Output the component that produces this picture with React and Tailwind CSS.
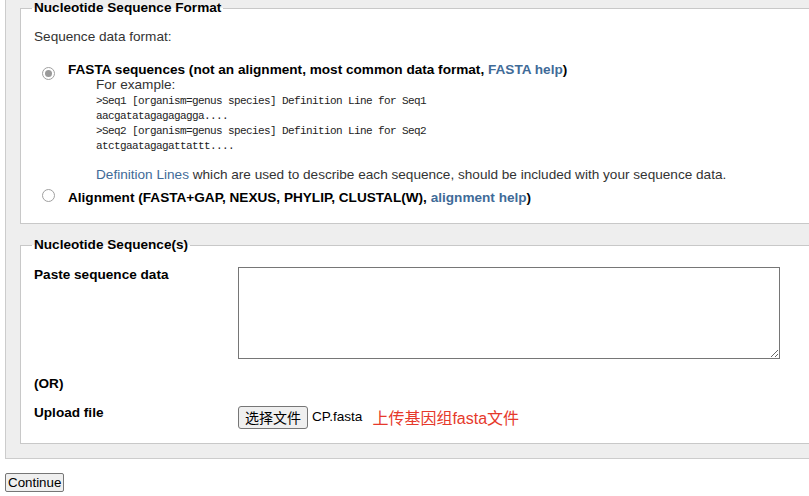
import React from 'react';

const SANS = { fontFamily: '"Liberation Sans", Arial, "Noto Sans CJK SC", sans-serif' };

function Radio({ checked }) {
  return (
    <span className="inline-flex w-[13px] h-[13px] shrink-0 rounded-full border border-[#a0a0a0] bg-white items-center justify-center">
      {checked && <span className="w-[7px] h-[7px] rounded-full bg-[#9a9a9a]" />}
    </span>
  );
}

export default function App() {
  return (
    <div className="w-[809px] h-[496px] overflow-hidden bg-white text-[13.6px] text-[#222]" style={SANS}>
      {/* Outer grey form box */}
      <div className="ml-[5px] w-[900px] bg-[#eeeeee] border-l border-b border-[#cccccc] pl-[14px] pb-[14px]">
        {/* Format */}
        <fieldset className="border border-[#c8c8c8] bg-white px-[13px] pb-[17px]">
          <legend className="font-bold leading-4 text-black -ml-0.5 px-0.5">Nucleotide Sequence Format</legend>
          <div className="mt-[13px] leading-4 text-[#333]">Sequence data format:</div>

          <div className="mt-[17px] flex items-start">
            <span className="ml-[8px] mt-[1px] mr-[13px]"><Radio checked /></span>
            <div className="leading-[15px]">
              <div className="font-bold text-black">
                FASTA sequences (not an alignment, most common data format,{' '}
                <a className="text-[#3f6b98]">FASTA help</a>)
              </div>
              <div className="pl-[28px]">
                <div className="text-[#333]">For example:</div>
                <div
                  className="mt-[2px] text-[11px] tracking-[-0.6px] leading-[15px] text-[#222] whitespace-pre"
                  style={{ fontFamily: '"Liberation Mono", monospace' }}
                >
                  <div>&gt;Seq1 [organism=genus species] Definition Line for Seq1</div>
                  <div>aacgatatagagagagga....</div>
                  <div>&gt;Seq2 [organism=genus species] Definition Line for Seq2</div>
                  <div>atctgaatagagattattt....</div>
                </div>
                <div className="mt-[13px] leading-4 text-[#333]">
                  <a className="text-[#3f6b98]">Definition Lines</a> which are used to describe each sequence, should be included with your sequence data.
                </div>
              </div>
            </div>
          </div>

          <div className="mt-[6px] flex items-center leading-4">
            <span className="ml-[8px] mr-[13px]"><Radio /></span>
            <div className="font-bold text-black">
              Alignment (FASTA+GAP, NEXUS, PHYLIP, CLUSTAL(W),{' '}
              <a className="text-[#3f6b98]">alignment help</a>)
            </div>
          </div>
        </fieldset>

        {/* Sequence */}
        <fieldset className="mt-[13px] border border-[#c8c8c8] bg-white px-[13px] pb-[12px]">
          <legend className="font-bold leading-4 text-black -ml-0.5 px-0.5">Nucleotide Sequence(s)</legend>

          <div className="mt-[14px] grid grid-cols-[204px_1fr] items-start">
            <div className="font-bold text-black leading-4">Paste sequence data</div>
            <textarea className="block w-[542px] h-[92px] border border-[#767676] bg-white resize" />
          </div>

          <div className="mt-[17px] font-bold text-black leading-4">(OR)</div>

          <div className="mt-[12px] grid grid-cols-[204px_1fr] items-start">
            <div className="font-bold text-black leading-4 mt-[1px]">Upload file</div>
            <div className="flex items-center">
              <button className="h-[23px] px-[6px] border border-[#767676] rounded-[3px] bg-[#efefef] text-[14px] text-black leading-4">
                选择文件
              </button>
              <span className="ml-[4px] text-black">CP.fasta</span>
              <span className="ml-[10px] mt-[3px] text-[16px] text-[#e6392b]">上传基因组fasta文件</span>
            </div>
          </div>
        </fieldset>
      </div>

      <button className="mt-[14px] ml-[5px] h-[19px] px-[2px] border border-[#767676] rounded-[2px] bg-[#efefef] text-[13.33px] text-black leading-4">
        Continue
      </button>
    </div>
  );
}
